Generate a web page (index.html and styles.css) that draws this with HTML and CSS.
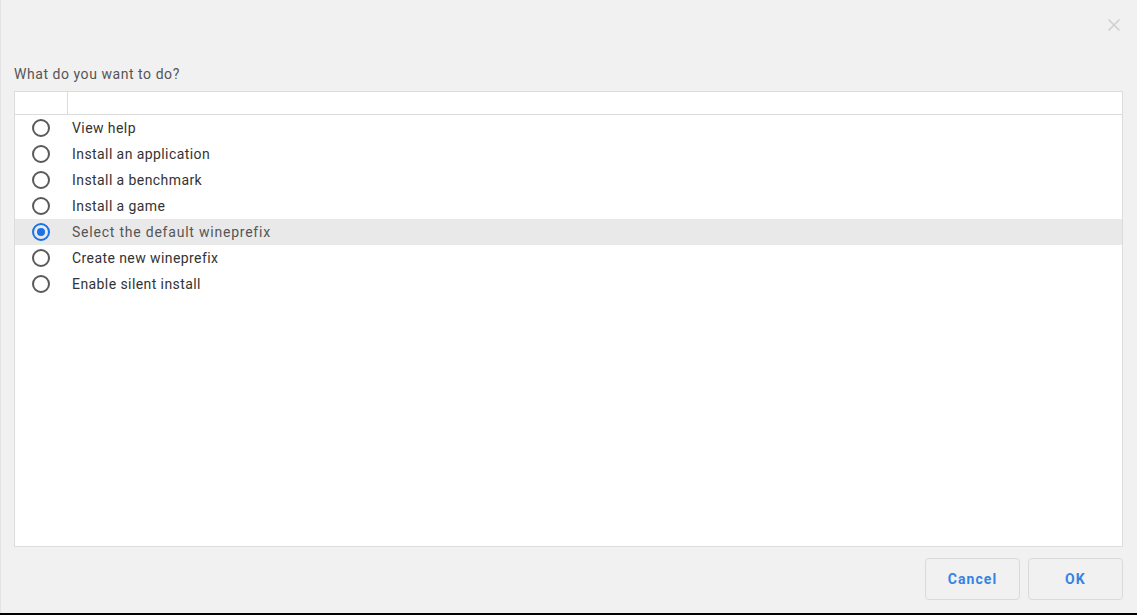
FILE: index.html
```html
<!DOCTYPE html>
<html>
<head>
<meta charset="utf-8">
<link rel="stylesheet" href="styles.css">
</head>
<body>
<div class="dialog">
  <div class="titlebar">
    <button class="close" aria-label="Close">
      <svg width="14" height="14" viewBox="0 0 14 14"><path d="M1.5 1.5L12.5 12.5M12.5 1.5L1.5 12.5" stroke="#cfcfcf" stroke-width="1.6" fill="none"/></svg>
    </button>
  </div>
  <div class="content">
    <div class="prompt">What do you want to do?</div>
    <div class="table">
      <div class="thead">
        <div class="th th-radio"></div>
        <div class="th th-text"></div>
      </div>
      <div class="tbody">
        <div class="row"><span class="radio"></span><span class="label">View help</span></div>
        <div class="row"><span class="radio"></span><span class="label">Install an application</span></div>
        <div class="row"><span class="radio"></span><span class="label">Install a benchmark</span></div>
        <div class="row"><span class="radio"></span><span class="label">Install a game</span></div>
        <div class="row selected"><span class="radio checked"></span><span class="label">Select the default wineprefix</span></div>
        <div class="row"><span class="radio"></span><span class="label">Create new wineprefix</span></div>
        <div class="row"><span class="radio"></span><span class="label">Enable silent install</span></div>
      </div>
    </div>
  </div>
  <div class="actions">
    <button class="btn">Cancel</button>
    <button class="btn">OK</button>
  </div>
</div>
</body>
</html>
```
FILE: styles.css
```css
html, body {
  margin: 0;
  padding: 0;
  height: 100%;
  background: #000;
}
body {
  font-family: Roboto, "Noto Sans", sans-serif;
  font-size: 14px;
  color: #333;
}
.dialog {
  box-sizing: border-box;
  height: 613px;
  background: #f1f1f1;
  border-left: 1px solid #e4e4e4;
  display: flex;
  flex-direction: column;
}
.titlebar {
  height: 50px;
  display: flex;
  justify-content: flex-end;
  align-items: flex-start;
}
.close {
  margin: 18px 16px 0 0;
  width: 14px;
  height: 14px;
  padding: 0;
  border: 0;
  background: none;
  display: flex;
}
.content {
  flex: 1;
  display: flex;
  flex-direction: column;
  padding: 0 14px 0 13px;
  min-height: 0;
}
.prompt {
  color: #555;
  height: 17px;
  line-height: 17px;
  margin-top: 16px;
  margin-bottom: 8px;
  letter-spacing: 0.55px;
}
.table {
  flex: 1;
  background: #fff;
  border: 1px solid #dcdcdc;
  display: flex;
  flex-direction: column;
}
.thead {
  height: 22px;
  display: flex;
  border-bottom: 1px solid #dcdcdc;
}
.th-radio {
  width: 52px;
  border-right: 1px solid #dcdcdc;
}
.tbody {
  flex: 1;
}
.row {
  height: 26px;
  display: flex;
  align-items: center;
}
.row.selected {
  background: #e9e9e9;
}
.radio {
  box-sizing: border-box;
  width: 18px;
  height: 18px;
  border: 2px solid #5a5a5a;
  border-radius: 50%;
  margin-left: 17px;
  margin-right: 22px;
  flex: none;
  position: relative;
}
.radio.checked {
  border-color: #1a73e8;
}
.radio.checked::after {
  content: "";
  position: absolute;
  left: 3px;
  top: 3px;
  width: 8px;
  height: 8px;
  border-radius: 50%;
  background: #1a73e8;
}
.label {
  color: #333;
  letter-spacing: 0.42px;
}
.row.selected .label {
  color: #555;
  letter-spacing: 0.78px;
}
.actions {
  height: 66px;
  display: flex;
  justify-content: flex-end;
  align-items: flex-start;
  gap: 8px;
  padding: 11px 14px 0 0;
  box-sizing: border-box;
}
.btn {
  width: 95px;
  height: 42px;
  background: #f1f1f1;
  border: 1px solid #dadada;
  border-radius: 4px;
  color: #3584e4;
  font-family: Roboto, "Noto Sans", sans-serif;
  font-size: 14px;
  font-weight: bold;
  letter-spacing: 1.1px;
}
```
